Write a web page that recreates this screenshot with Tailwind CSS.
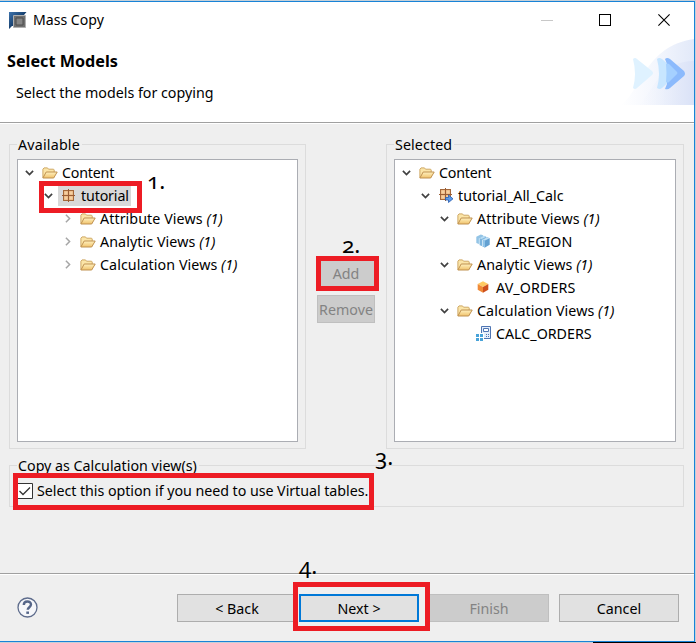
<!DOCTYPE html>
<html lang="en">
<head>
<meta charset="utf-8">
<title>Mass Copy</title>
<script src="https://cdn.jsdelivr.net/npm/@tailwindcss/browser@4"></script>
</head>
<body class="relative w-[696px] h-[643px] overflow-hidden bg-[#c5d0d8] font-['Noto_Sans',sans-serif] text-[14.25px] leading-5 text-black">
<svg class="absolute size-0">
  <defs>
    <linearGradient id="gold" x1="0" y1="0" x2="0" y2="1"><stop offset="0" stop-color="#fff1c0"/><stop offset="1" stop-color="#f0c26b"/></linearGradient>
    <linearGradient id="steel" x1="0" y1="0" x2="1" y2="1"><stop offset="0" stop-color="#3f74ad"/><stop offset=".5" stop-color="#17406f"/><stop offset="1" stop-color="#7897b8"/></linearGradient>
    <linearGradient id="wave" x1="0" y1="0" x2="1" y2="0"><stop offset="0" stop-color="#ffffff"/><stop offset=".5" stop-color="#f3f6fd"/><stop offset="1" stop-color="#e2e9f9"/></linearGradient>
    <linearGradient id="wave2" x1="0" y1="0" x2="1" y2="0"><stop offset="0" stop-color="#f0f3fc" stop-opacity="0"/><stop offset="1" stop-color="#dae2f7"/></linearGradient>
    <symbol id="open" viewBox="0 0 9 6"><path d="M.9.9 4.5 4.5 8.1.9" fill="none" stroke="#404040" stroke-width="1.7"/></symbol>
    <symbol id="closed" viewBox="0 0 6 9"><path d="M.9.8 4.6 4.5.9 8.2" fill="none" stroke="#a6a6a6" stroke-width="1.5"/></symbol>
    <symbol id="folder" viewBox="0 0 16 12"><path d="M.9 10.8V2.2L2 .9h3.5l1 1.3h5.1l.6.8v2" fill="#fbe5a8" stroke="#cfa965"/><path d="M.9 11 4.2 5h11L11.7 11z" fill="url(#gold)" stroke="#bf9150"/></symbol>
    <symbol id="package" viewBox="0 0 14 14"><rect x="1.5" y="1.5" width="10" height="10" fill="#e9b27c" stroke="#a4683a"/><path d="M2.500 2.500h3v3h-3zM7.500 2.500h3v3h-3zM2.500 7.500h3v3h-3zM7.500 7.500h3v3h-3z" fill="#f5cfa0"/><path d="M6.500 0v13M0 6.500h13" stroke="#9a5d34"/></symbol>
    <symbol id="attribute" viewBox="0 0 14 14"><path d="M.3 2.800 4.800.4 7 1.200v6.500L2.800 10 .3 9z" fill="#93c4e6"/><path d="M3.300 4.200 7.800 1.800l2.400.9v7L5.600 12l-2.300-1z" fill="#7db5de"/><path d="m3.300 4.200 4.500-2.400 2.400.9-4.600 2.400z" fill="#b9dcf3"/><path d="m6.500 5.700 4.500-2.500 2.700 1v6.600L9 13.500l-2.500-1z" fill="#63a1d2"/><path d="M6.500 5.700 9 6.600v6.900l-2.500-1z" fill="#92c5e9"/><path d="m6.500 5.700 4.500-2.500 2.700 1L9 6.600z" fill="#c0e0f5"/><path d="M3.300 4.200V11M6.500 5.700v6.800" stroke="#e6f4fc" stroke-width=".7"/></symbol>
    <symbol id="cube" viewBox="0 0 12 12"><path d="m6 .3 5.300 2.700L6 6 .7 3z" fill="#ffca62"/><path d="M.7 3 6 6v5.700L.7 8.800z" fill="#f08a38"/><path d="M11.300 3 6 6v5.700l5.300-2.900z" fill="#cd4f1d"/></symbol>
    <symbol id="calc" viewBox="0 0 15 15"><path d="M5.500.5h9v12h-9z" fill="#e5eefa" stroke="#4f75b3"/><path d="M7.500 2.500h5v3h-5z" fill="#fff" stroke="#4f75b3"/><path d="M10 8h1v1h-1zM12 8h1v1h-1zM10 10h1v1h-1zM12 10h1v1h-1z" fill="#4f75b3"/><path d="M0 7h8v8H0z" fill="#fff"/><path d="M0 8h3v3H0zM4 8h3v3H4zM0 12h3v3H0zM4 12h3v3H4z" fill="#48a3d9"/></symbol>
  </defs>
</svg>

<div class="flex h-[643px] w-[695px] flex-col pt-px">
<div class="flex h-[641px] shrink-0 flex-col border-y border-r border-[#1883d7] bg-[#efefef]">
  <header class="relative h-[121px] shrink-0 border-b border-[#a0a0a0] bg-white">
    <svg class="absolute right-0 top-[37px] h-[66px] w-[73px]" viewBox="0 0 73 66">
      <path d="M0 66C20 52 24 7 73 0v66z" fill="url(#wave)"/>
      <path d="M18 66C34 49 40 22 73 22v44z" fill="url(#wave2)"/>
      <path d="M12 20q2-2 4 0l15 12q2 2 0 4L16 49q-2 2-4 0 4-14 0-29z" fill="#dff2ff"/>
      <path d="M36 20q2-2 5 0l14 12q2 2 0 4L41 49q-2 2-5 0 4-14 0-29z" fill="#c8e6ff"/>
      <path d="M44 20q2-2 5 0l14 12q2 3 0 5L49 49q-2 2-5 1l2-5V25z" fill="#8cbafc"/>
      <path d="M45 25q2-1 3 0l8 8q1 1 0 2l-8 8q-1 1-3 0 1-9 0-18z" fill="#a5d0ff"/>
    </svg>
    <div class="flex h-[36px] items-center pl-[9px]">
      <svg class="h-[17px] w-[18px]" viewBox="0 0 18 17"><path d="M0 0h17.500L15 3v11H3L0 17z" fill="url(#steel)"/><path d="M4.500 3.500h12v12h-12z" fill="#6f6f6f" stroke="#b0b0b0"/><path d="M7 6h7v7H7z" fill="#858585" stroke="#4c4c4c"/></svg>
      <h1 class="ml-[6px] text-[14.1px]">Mass Copy</h1>
      <div class="ml-auto flex items-center pr-[24px]">
        <div class="mr-[46px] h-px w-3 bg-[#c8c8c8]"></div>
        <div class="mr-[47px] size-3 border border-black"></div>
        <svg class="size-3" viewBox="0 0 12 12"><path d="m.4.400 11.200 11.200m0-11.200L.4 11.600" stroke="#000" stroke-width="1.100"/></svg>
      </div>
    </div>
    <h2 class="mt-[13px] pl-[7px] text-[16.2px] font-bold">Select Models</h2>
    <p class="mt-[12px] pl-4">Select the models for copying</p>
  </header>

  <main class="h-[451px] shrink-0 border-t border-b border-t-white border-b-[#a0a0a0] px-[9px] pt-[20px]">
    <div class="flex">
      <section class="h-[305px] w-[297px] border border-[#dcdcdc] px-[7px]">
        <h3 class="-mt-[10px] w-fit bg-[#efefef] pr-[2px] pl-[1px]"><span class="tracking-[.2px]">Available</span></h3>
        <div class="mt-[4px] h-[283px] border border-[#abadb3] bg-white pt-[1px]">
          <div class="flex h-[23px] items-center pl-[7px]"><svg class="h-[6px] w-[9px]"><use href="#open"/></svg><svg class="mr-1 ml-[8px] h-3 w-4"><use href="#folder"/></svg><span class="tracking-[-.2px]">Content</span></div>
          <div class="flex h-[23px] items-center pl-[26px]"><svg class="h-[6px] w-[9px]"><use href="#open"/></svg><div class="ml-[5px] flex h-[21px] w-[73px] items-center bg-[#d9d9d9] pl-[4px]"><svg class="mr-[5px] size-[14px]"><use href="#package"/></svg><span class="tracking-[-.15px]">tutorial</span></div></div>
          <div class="flex h-[23px] items-center pl-[47px] tracking-[.08px]"><svg class="h-[9px] w-[6px]"><use href="#closed"/></svg><svg class="mr-1 ml-[9px] h-3 w-4"><use href="#folder"/></svg>Attribute Views&nbsp;<i>(1)</i></div>
          <div class="flex h-[23px] items-center pl-[47px] tracking-[.08px]"><svg class="h-[9px] w-[6px]"><use href="#closed"/></svg><svg class="mr-1 ml-[9px] h-3 w-4"><use href="#folder"/></svg>Analytic Views&nbsp;<i>(1)</i></div>
          <div class="flex h-[23px] items-center pl-[47px] tracking-[.08px]"><svg class="h-[9px] w-[6px]"><use href="#closed"/></svg><svg class="mr-1 ml-[9px] h-3 w-4"><use href="#folder"/></svg>Calculation Views&nbsp;<i>(1)</i></div>
        </div>
      </section>

      <div class="flex w-[80px] flex-col items-start gap-2 pt-[115px] pl-[11px] text-[#838383]">
        <button class="h-7 w-[58px] border border-[#bfbfbf] bg-[#cccccc] pt-[2px]">Add</button>
        <button class="h-7 w-[58px] border border-[#bfbfbf] bg-[#cccccc] pt-[2px]">Remove</button>
      </div>

      <section class="h-[305px] w-[298px] border border-[#dcdcdc] px-[7px]">
        <h3 class="-mt-[10px] w-fit bg-[#efefef] pr-[2px] pl-[1px]"><span class="tracking-[.1px]">Selected</span></h3>
        <div class="mt-[4px] h-[283px] border border-[#abadb3] bg-white pt-[1px]">
          <div class="flex h-[23px] items-center pl-[7px]"><svg class="h-[6px] w-[9px]"><use href="#open"/></svg><svg class="mr-1 ml-[8px] h-3 w-4"><use href="#folder"/></svg><span class="tracking-[-.2px]">Content</span></div>
          <div class="flex h-[23px] items-center pl-[26px]"><svg class="h-[6px] w-[9px]"><use href="#open"/></svg><svg class="mr-[4px] ml-[9px] size-[15px]" viewBox="0 0 15 15"><use href="#package" width="14" height="14"/><path d="M6.500 9.500h3V7l4.500 3.800-4.500 3.700V12h-3z" fill="#5b9bea" stroke="#245ab0" stroke-width=".8"/></svg>tutorial_All_Calc</div>
          <div class="flex h-[23px] items-center pl-[45px] tracking-[.08px]"><svg class="h-[6px] w-[9px]"><use href="#open"/></svg><svg class="mr-1 ml-[8px] h-3 w-4"><use href="#folder"/></svg>Attribute Views&nbsp;<i>(1)</i></div>
          <div class="flex h-[23px] items-center pl-[81px]"><svg class="mr-[6px] mb-[2px] size-[14px]"><use href="#attribute"/></svg>AT_REGION</div>
          <div class="flex h-[23px] items-center pl-[45px] tracking-[.08px]"><svg class="h-[6px] w-[9px]"><use href="#open"/></svg><svg class="mr-1 ml-[8px] h-3 w-4"><use href="#folder"/></svg>Analytic Views&nbsp;<i>(1)</i></div>
          <div class="flex h-[23px] items-center pl-[82px]"><svg class="mr-[7px] mb-px size-3"><use href="#cube"/></svg><span class="tracking-[.1px]">AV_ORDERS</span></div>
          <div class="flex h-[23px] items-center pl-[45px] tracking-[.08px]"><svg class="h-[6px] w-[9px]"><use href="#open"/></svg><svg class="mr-1 ml-[8px] h-3 w-4"><use href="#folder"/></svg>Calculation Views&nbsp;<i>(1)</i></div>
          <div class="flex h-[23px] items-center pl-[81px]"><svg class="mr-[5px] size-[15px]"><use href="#calc"/></svg>CALC_ORDERS</div>
        </div>
      </section>
    </div>

    <section class="mt-[16px] h-[42px] w-[675px] border border-[#dcdcdc] pl-[7px]">
      <h3 class="-mt-[10px] w-fit bg-[#efefef] pr-[2px] pl-[1px]"><span>Copy as Calculation view(s)</span></h3>
      <label class="mt-[5px] flex items-center"><svg class="mr-1 size-4" viewBox="0 0 16 16"><path d="M.5.500h15v15H.5z" fill="#fff" stroke="#333"/><path d="m2.500 8 3.500 3.500L13 4.500" fill="none" stroke="#333" stroke-width="1.300"/></svg><span class="tracking-[-.04px]">Select this option if you need to use Virtual tables.</span></label>
    </section>
  </main>

  <footer class="flex flex-1 items-start border-t border-white pt-[19px] pl-[17px]">
    <svg class="mt-[3px] size-[21px]" viewBox="0 0 21 21"><circle cx="10.500" cy="10.500" r="9.500" fill="#f6f7fa" stroke="#5e6c8c" stroke-width="1.300"/><path d="M6.800 8C6.800 3.400 14 3.500 14 7.600c0 2.500-3.300 2.700-3.300 5.200" fill="none" stroke="#566689" stroke-width="2.400"/><path d="M9.300 14.500h2.700v2.400H9.300z" fill="#566689"/></svg>
    <button class="ml-[139px] h-7 w-[120px] border border-[#adadad] bg-[#e1e1e1] pt-[2px]">&lt; Back</button>
    <button class="ml-[2px] h-7 w-[120px] border-2 border-[#0078d7] bg-[#e1e1e1] pt-[2px]">Next &gt;</button>
    <button class="ml-[10px] h-7 w-[120px] border border-[#bfbfbf] bg-[#cccccc] pt-[2px] text-[#838383]">Finish</button>
    <button class="ml-[10px] h-7 w-[120px] border border-[#adadad] bg-[#e1e1e1] pt-[2px]">Cancel</button>
  </footer>
</div>
<div class="-mr-px ml-[593px] h-px bg-black"></div>
</div>

<div class="absolute top-[181px] left-[39px] h-8 w-[103px] border-[5px] border-[#ed1c24]"></div>
<div class="absolute top-[256px] left-[316px] h-[35px] w-[63px] border-[5px] border-[#ed1c24]"></div>
<div class="absolute top-[473px] left-[13px] h-[37px] w-[361px] border-[5px] border-[#ed1c24]"></div>
<div class="absolute top-[582px] left-[293px] h-[49px] w-[137px] border-[5px] border-[#ed1c24]"></div>
<div class="absolute top-[169px] left-[147px] text-[22.500px] leading-6 oldstyle-nums">1.</div>
<div class="absolute top-[233px] left-[342px] text-[22.500px] leading-6 oldstyle-nums">2.</div>
<div class="absolute top-[445px] left-[375px] text-[22.500px] leading-6 oldstyle-nums">3.</div>
<div class="absolute top-[554px] left-[299px] text-[22.500px] leading-6 oldstyle-nums">4.</div>
</body>
</html>
